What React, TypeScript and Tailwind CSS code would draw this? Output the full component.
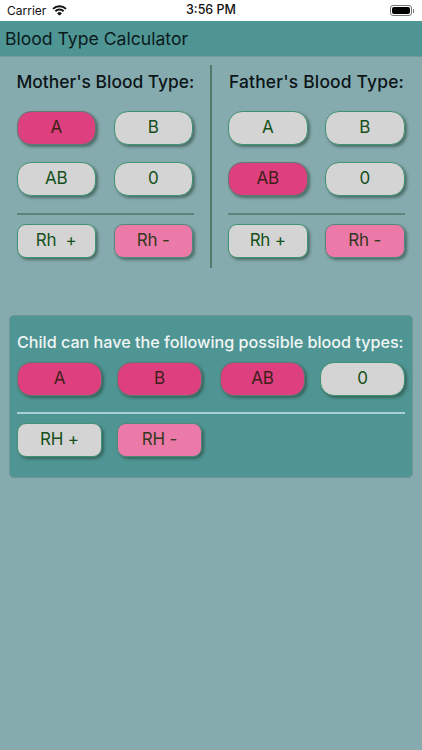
import type { ReactNode } from 'react'

type Tone = 'off' | 'on' | 'soft'

const toneClass: Record<Tone, string> = {
  off: 'bg-[#d4d4d4] border-[#3f9272] text-[#14501a]',
  on: 'bg-[#dd3f7f] border-[#5f7a70] text-[#3f2018]',
  soft: 'bg-[#ec7aa8] border-[#4f8a78] text-[#33381c]',
}

function Pill({ label, tone = 'off', square = false, wide = false }: { label: ReactNode; tone?: Tone; square?: boolean; wide?: boolean }) {
  return (
    <div
      className={`flex h-[34px] items-center justify-center border text-[17px] tracking-[-0.2px] whitespace-pre shadow-[2px_2px_3px_rgba(40,70,60,0.6)] ${
        wide ? 'w-[85px]' : 'w-[79.5px]'
      } ${square ? 'rounded-[9px]' : 'rounded-[14px]'} ${toneClass[tone]}`}
    >
      {label}
    </div>
  )
}

function ParentColumn({ title, selected, plus, minus, titleClass }: { title: string; selected: string; plus: string; minus: string; titleClass?: string }) {
  return (
    <div className="w-[177px]">
      <h2 className={`h-[46px] pt-[6px] text-center text-[17.4px] leading-[22px] font-medium text-[#0b1418] whitespace-nowrap ${titleClass ?? ''}`}>{title}</h2>
      <div className="grid grid-cols-[79.5px_79.5px] gap-x-[17.5px] gap-y-[17px]">
        {['A', 'B', 'AB', '0'].map((t) => (
          <Pill key={t} label={t} tone={t === selected ? 'on' : 'off'} />
        ))}
      </div>
      <div className="mt-[17px] mb-[9px] h-[2px] bg-[#5a8578]" />
      <div className="flex gap-x-[17.5px]">
        <Pill label={plus} square />
        <Pill label={minus} tone="soft" square />
      </div>
    </div>
  )
}

export default function App() {
  return (
    <div className="w-[422px] h-[750px] overflow-hidden bg-[#86abae] font-['Inter','Noto_Sans',sans-serif]">
      {/* status bar */}
      <div className="relative flex h-[21px] items-center justify-between bg-white pl-[7px] pr-[8px] text-[#111]">
        <div className="flex items-center gap-[6px] text-[12px]">
          <span>Carrier</span>
          <svg width="15" height="11" viewBox="0 0 15 11" fill="none" stroke="#111" strokeWidth="2">
            <path d="M1 3.9C4.6.3 10.4.3 14 3.9" />
            <path d="M3.4 6.3c2.3-2.3 5.9-2.3 8.2 0" />
            <path d="M5.6 8.2c1.1-1 2.7-1 3.8 0L7.5 10.2z" fill="#111" stroke="#111" strokeWidth="1" />
          </svg>
        </div>
        <span className="absolute left-0 right-0 text-center text-[12.5px] font-medium">3:56 PM</span>
        <div className="flex items-center gap-px">
          <div className="h-[11px] w-[22px] rounded-[3px] border border-[#777] p-px">
            <div className="h-full w-full rounded-[2px] bg-black" />
          </div>
          <div className="h-[4px] w-px bg-[#777]" />
        </div>
      </div>

      {/* nav bar */}
      <div className="flex h-[36px] items-center border-b border-[#6f9a96] bg-[#4f9593] pl-[5px] pt-[1px] text-[17.6px] text-[#0a1a1c]">
        Blood Type Calculator
      </div>

      {/* parents */}
      <div className="mt-[8px] flex pl-[16.5px]">
        <ParentColumn title="Mother's Blood Type:" selected="A" plus="Rh  +" minus="Rh -" />
        <div className="ml-[16.5px] mr-[16px] h-[203px] w-[2px] bg-[#4f7a6c]" />
        <ParentColumn title="Father's Blood Type:" selected="AB" plus="Rh +" minus="Rh -" titleClass="tracking-[0.2px]" />
      </div>

      {/* result */}
      <div className="mx-[9px] mt-[47px] h-[163px] rounded-[5px] border border-[#6f9496] bg-[#4f9593] px-[7px]">
        <p className="mt-[15px] h-[22px] text-[16.15px] leading-[22px] font-medium text-[#f0f5f5] whitespace-nowrap">
          Child can have the following possible blood types:
        </p>
        <div className="mt-[9px] flex">
          <div className="flex gap-x-[15px]">
            <Pill label="A" tone="on" wide />
            <Pill label="B" tone="on" wide />
          </div>
          <div className="ml-[18px] flex gap-x-[15px]">
            <Pill label="AB" tone="on" wide />
            <Pill label="0" wide />
          </div>
        </div>
        <div className="mt-[16px] mb-[9px] h-[2px] bg-[#a8d0d4]" />
        <div className="flex gap-x-[15px]">
          <Pill label="RH +" square wide />
          <Pill label="RH -" tone="soft" square wide />
        </div>
      </div>
    </div>
  )
}
